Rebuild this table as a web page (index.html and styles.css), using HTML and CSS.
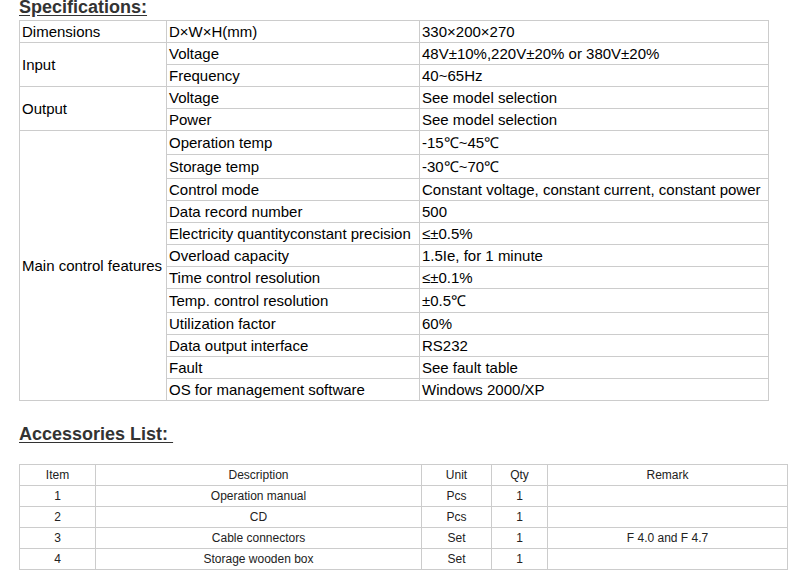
FILE: index.html
```html
<!DOCTYPE html>
<html lang="en">
<head>
    <meta charset="UTF-8"/>
    <meta name="viewport" content="width=device-width, initial-scale=1"/>
    <title>Specifications</title>
    <link rel="stylesheet" href="styles.css">
</head>
<body>
<h2 class="section-title first"><span>Specifications:</span></h2>
<table class="spec-table">
    <colgroup>
        <col class="col-group"/>
        <col class="col-name"/>
        <col class="col-value"/>
    </colgroup>
    <tr>
        <td>Dimensions</td>
        <td>D×W×H(mm)</td>
        <td>330×200×270</td>
    </tr>
    <tr>
        <td rowspan="2">Input</td>
        <td>Voltage</td>
        <td>48V±10%,220V±20% or 380V±20%</td>
    </tr>
    <tr>
        <td>Frequency</td>
        <td>40~65Hz</td>
    </tr>
    <tr>
        <td rowspan="2">Output</td>
        <td>Voltage</td>
        <td>See model selection</td>
    </tr>
    <tr>
        <td>Power</td>
        <td>See model selection</td>
    </tr>
    <tr class="tall">
        <td rowspan="12">Main control features</td>
        <td>Operation temp</td>
        <td>-15℃~45℃</td>
    </tr>
    <tr class="tall">
        <td>Storage temp</td>
        <td>-30℃~70℃</td>
    </tr>
    <tr>
        <td>Control mode</td>
        <td>Constant voltage, constant current, constant power</td>
    </tr>
    <tr>
        <td>Data record number</td>
        <td>500</td>
    </tr>
    <tr>
        <td>Electricity quantityconstant precision</td>
        <td>≤±0.5%</td>
    </tr>
    <tr>
        <td>Overload capacity</td>
        <td>1.5Ie, for 1 minute</td>
    </tr>
    <tr>
        <td>Time control resolution</td>
        <td>≤±0.1%</td>
    </tr>
    <tr class="tall">
        <td>Temp. control resolution</td>
        <td>±0.5℃</td>
    </tr>
    <tr>
        <td>Utilization factor</td>
        <td>60%</td>
    </tr>
    <tr>
        <td>Data output interface</td>
        <td>RS232</td>
    </tr>
    <tr>
        <td>Fault</td>
        <td>See fault table</td>
    </tr>
    <tr>
        <td>OS for management software</td>
        <td>Windows 2000/XP</td>
    </tr>
</table>

<h2 class="section-title second"><span>Accessories List:&nbsp;</span></h2>
<table class="acc-table">
    <colgroup>
        <col class="col-item"/>
        <col class="col-desc"/>
        <col class="col-unit"/>
        <col class="col-qty"/>
        <col class="col-remark"/>
    </colgroup>
    <tr>
        <td>Item</td>
        <td>Description</td>
        <td>Unit</td>
        <td>Qty</td>
        <td>Remark</td>
    </tr>
    <tr>
        <td>1</td>
        <td>Operation manual</td>
        <td>Pcs</td>
        <td>1</td>
        <td></td>
    </tr>
    <tr>
        <td>2</td>
        <td>CD</td>
        <td>Pcs</td>
        <td>1</td>
        <td></td>
    </tr>
    <tr>
        <td>3</td>
        <td>Cable connectors</td>
        <td>Set</td>
        <td>1</td>
        <td>F 4.0 and F 4.7</td>
    </tr>
    <tr>
        <td>4</td>
        <td>Storage wooden box</td>
        <td>Set</td>
        <td>1</td>
        <td></td>
    </tr>
</table>
</body>
</html>
```

FILE: styles.css
```css
body {
    background-color: #fff;
    font-family: "Liberation Sans", Arial, sans-serif;
    color: #000;
    margin: 0;
    padding: 0 0 0 19px;
}

.section-title {
    font-size: 18px;
    font-weight: bold;
    line-height: 20px;
    color: #333;
}

.section-title span {
    text-decoration: underline;
    text-underline-offset: 2px;
}

.section-title.first {
    margin: -3px 0 3px;
}

.section-title.second {
    margin: 23px 0 20px;
}

table {
    border-collapse: collapse;
    table-layout: fixed;
}

td {
    border: 1px solid #cccccc;
    padding: 0;
    white-space: nowrap;
}

/* specifications */
.spec-table {
    width: 749px;
    font-size: 15px;
}

.spec-table td {
    height: 21px;
    line-height: 21px;
    padding: 0 1px 0 2px;
    vertical-align: middle;
}

.spec-table tr.tall td {
    height: 23px;
    line-height: 23px;
}

.col-group {
    width: 147px;
}

.col-name {
    width: 253px;
}

.col-value {
    width: 349px;
}

/* accessories */
.acc-table {
    width: 768px;
    font-size: 12px;
    color: #222;
}

.acc-table td {
    height: 20px;
    line-height: 20px;
    text-align: center;
}

.col-item {
    width: 76px;
}

.col-desc {
    width: 326px;
}

.col-unit {
    width: 70px;
}

.col-qty {
    width: 56px;
}

.col-remark {
    width: 240px;
}
```
